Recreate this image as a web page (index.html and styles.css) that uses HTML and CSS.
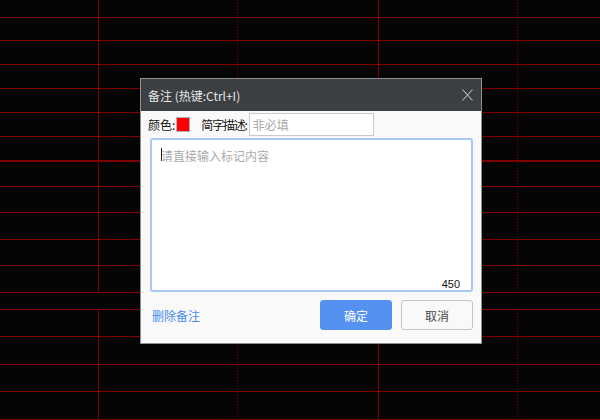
FILE: index.html
```html
<!DOCTYPE html>
<html lang="zh-CN">
<head>
<meta charset="utf-8">
<title>备注</title>
<link rel="stylesheet" href="styles.css">
</head>
<body>
<div class="screen">
  <div class="grid">
    <div class="row" style="height:18px"><i></i><i class="dot"></i><i></i><i class="dot"></i><i class="last"></i></div>
    <div class="row" style="height:23px"><i></i><i class="dot"></i><i></i><i class="dot"></i><i class="last"></i></div>
    <div class="row" style="height:24px"><i></i><i class="dot"></i><i></i><i class="dot"></i><i class="last"></i></div>
    <div class="row" style="height:24px"><i></i><i class="dot"></i><i></i><i class="dot"></i><i class="last"></i></div>
    <div class="row" style="height:24px"><i></i><i class="dot"></i><i></i><i class="dot"></i><i class="last"></i></div>
    <div class="row" style="height:24px"><i></i><i class="dot"></i><i></i><i class="dot"></i><i class="last"></i></div>
    <div class="row thick" style="height:25px"><i></i><i class="dot"></i><i></i><i class="dot"></i><i class="last"></i></div>
    <div class="row" style="height:25px"><i></i><i class="dot"></i><i></i><i class="dot"></i><i class="last"></i></div>
    <div class="row" style="height:26px"><i></i><i class="dot"></i><i></i><i class="dot"></i><i class="last"></i></div>
    <div class="row" style="height:27px"><i></i><i class="dot"></i><i></i><i class="dot"></i><i class="last"></i></div>
    <div class="row" style="height:26px"><i></i><i class="dot"></i><i></i><i class="dot"></i><i class="last"></i></div>
    <div class="row" style="height:27px"><i></i><i class="dot"></i><i></i><i class="dot"></i><i class="last"></i></div>
    <div class="row gap" style="height:17px"></div>
    <div class="row" style="height:27px"><i></i><i class="dot"></i><i></i><i class="dot"></i><i class="last"></i></div>
    <div class="row" style="height:28px"><i></i><i class="dot"></i><i></i><i class="dot"></i><i class="last"></i></div>
    <div class="row" style="height:27px"><i></i><i class="dot"></i><i></i><i class="dot"></i><i class="last"></i></div>
    <div class="row" style="height:28px"><i></i><i class="dot"></i><i></i><i class="dot"></i><i class="last"></i></div>
  </div>

  <div class="dialog">
    <div class="titlebar">
      <span class="title">备注 (热键:Ctrl+I)</span>
      <svg class="close" width="11" height="12" viewBox="0 0 11 12" aria-hidden="true">
        <path d="M0.5 0.5 L10.5 11.5 M10.5 0.5 L0.5 11.5" stroke="#b9bcbf" stroke-width="1.1" fill="none"/>
      </svg>
    </div>
    <div class="body">
      <div class="fields">
        <span class="label">颜色:</span>
        <span class="swatch"></span>
        <span class="label desc">简字描述:</span>
        <input class="short" type="text" placeholder="非必填">
      </div>
      <div class="editor">
        <textarea class="content" placeholder="请直接输入标记内容"></textarea>
        <span class="caret"></span>
        <span class="count">450</span>
      </div>
      <div class="footer">
        <a class="remove">删除备注</a>
        <div class="buttons">
          <button class="btn primary">确定</button>
          <button class="btn">取消</button>
        </div>
      </div>
    </div>
  </div>
</div>
</body>
</html>
```

FILE: styles.css
```css
* { box-sizing: border-box; }
html, body { margin: 0; padding: 0; }
body {
  width: 600px;
  height: 420px;
  overflow: hidden;
  background: #050505;
  font-family: "Noto Sans CJK SC", "Noto Sans", sans-serif;
}
.screen {
  position: relative;
  width: 600px;
  height: 420px;
  background: #050505;
}
.grid {
  display: flex;
  flex-direction: column;
}
.row {
  display: flex;
  border-bottom: 1px solid #7e0000;
}
.row.thick { border-bottom-width: 2px; }
.row i {
  display: block;
  height: 100%;
  border-right: 1px solid #7e0000;
}
.row i:nth-child(1) { width: 99px; }
.row i:nth-child(2) { width: 139px; }
.row i:nth-child(3) { width: 141px; }
.row i:nth-child(4) { width: 139px; }
.row i.dot {
  border-right: none;
  background: repeating-linear-gradient(to bottom, #800000 0 1px, transparent 1px 3px) right top / 1px 100% no-repeat;
}
.row i.last { flex: 1; border-right: none; }

.dialog {
  position: absolute;
  left: 140px;
  top: 78px;
  width: 342px;
  height: 266px;
  border: 1px solid #8d9195;
  background: #f9f9f9;
  display: flex;
  flex-direction: column;
}
.titlebar {
  height: 32px;
  background: #3c4043;
  color: #e4e5e6;
  display: flex;
  align-items: center;
  justify-content: space-between;
  padding: 0 8px 0 7px;
  font-size: 12px;
}
.close { display: block; }

.body {
  flex: 1;
  display: flex;
  flex-direction: column;
  padding: 2px 8px 0 7px;
}
.fields {
  display: flex;
  align-items: center;
  height: 23px;
  font-size: 12px;
  color: #111;
}
.label { white-space: nowrap; }
.swatch {
  width: 14px;
  height: 15px;
  background: #ff0000;
  border: 1px solid #b0b0b0;
  margin-left: 1px;
}
.desc {
  margin-left: 11px;
  letter-spacing: -1.2px;
}
.short {
  width: 125px;
  height: 23px;
  margin: 0 0 0 2px;
  border: 1px solid #cbcbcb;
  background: #fff;
  padding: 0 3px;
  font-family: inherit;
  font-size: 12px;
  color: #333;
  outline: none;
}
.short::placeholder { color: #a8a8a8; }

.editor {
  position: relative;
  margin: 2px 0 0 2px;
  height: 154px;
}
.content {
  display: block;
  width: 100%;
  height: 100%;
  resize: none;
  border: 2px solid #a9c8f6;
  border-radius: 3px;
  background: #fff;
  padding: 7px 9px;
  font-family: inherit;
  font-size: 12px;
  line-height: 17px;
  color: #333;
  outline: none;
}
.content::placeholder { color: #a9a9a9; }
.caret {
  position: absolute;
  left: 11px;
  top: 10px;
  width: 1px;
  height: 13px;
  background: #222;
}
.count {
  position: absolute;
  right: 13px;
  bottom: 2px;
  font-family: "Liberation Sans", sans-serif;
  font-size: 11px;
  color: #111;
}

.footer {
  display: flex;
  align-items: center;
  justify-content: space-between;
  margin-top: 8px;
  padding-left: 4px;
}
.remove {
  font-size: 12px;
  color: #4a8cf0;
  cursor: pointer;
}
.buttons {
  display: flex;
  gap: 9px;
}
.btn {
  width: 72px;
  height: 30px;
  border: 1px solid #c4c4c4;
  border-radius: 3px;
  background: #f9f9f9;
  color: #4a4a4a;
  font-family: inherit;
  font-size: 12px;
  padding: 0;
}
.btn.primary {
  background: #5591f1;
  border-color: #5591f1;
  color: #fff;
}
```
